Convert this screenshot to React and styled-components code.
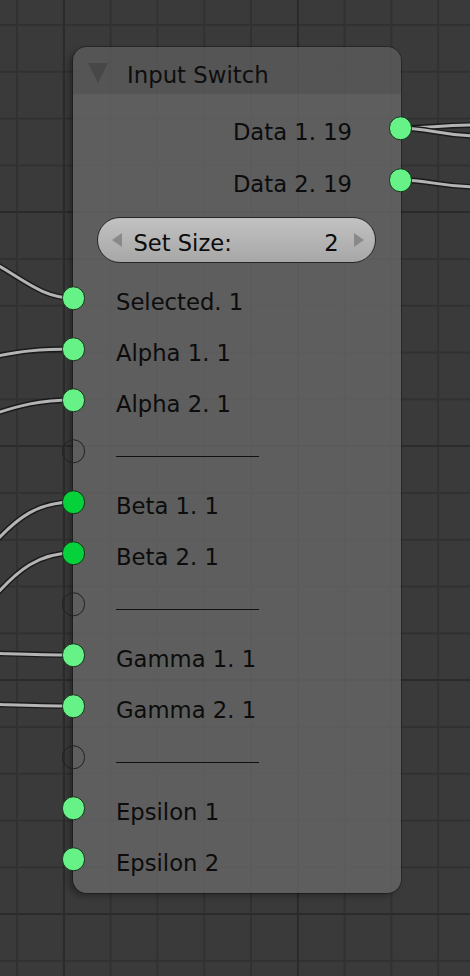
import React from 'react';
import styled, { createGlobalStyle } from 'styled-components';

const GlobalStyle = createGlobalStyle`
  html, body {
    margin: 0;
    padding: 0;
    background: #3a3a3a;
  }
  body {
    font-family: "DejaVu Sans", "Liberation Sans", sans-serif;
  }
`;

const outputs = ['Data 1. 19', 'Data 2. 19'];

const inputs = [
  { label: 'Selected. 1' },
  { label: 'Alpha 1. 1' },
  { label: 'Alpha 2. 1' },
  { empty: true },
  { label: 'Beta 1. 1', dark: true },
  { label: 'Beta 2. 1', dark: true },
  { empty: true },
  { label: 'Gamma 1. 1' },
  { label: 'Gamma 2. 1' },
  { empty: true },
  { label: 'Epsilon 1' },
  { label: 'Epsilon 2' },
];

// links drawn on the canvas (node editor noodles)
const links = [
  'M -12 260 C 20 276, 40 298, 73 298',
  'M -12 358 C 20 351, 40 349, 73 349',
  'M -12 416 C 20 405, 40 400, 73 400',
  'M -12 550 C 18 515, 40 502, 73 502',
  'M -12 604 C 18 568, 40 553, 73 553',
  'M -12 653 C 20 654, 40 655, 73 655',
  'M -12 704 C 20 705, 40 706, 73 706',
  'M 400 128 C 430 128, 440 125, 480 125',
  'M 400 128 C 430 128, 440 136, 480 136',
  'M 400 180 C 430 180, 440 187, 480 187',
];

const App = () => (
  <>
    <GlobalStyle />
    <Canvas>
      <Wires viewBox="0 0 470 976">
        {links.map((d, i) => (
          <g key={i}>
            <path d={d} stroke="#1a1a1a" strokeWidth="5.8" fill="none" />
            <path d={d} stroke="#b4b4b4" strokeWidth="3" fill="none" />
          </g>
        ))}
      </Wires>
      <Node>
        <Header>
          <Collapse />
          <Title>Input Switch</Title>
        </Header>
        <Body>
          {outputs.map((o) => (
            <OutRow key={o}>
              <Label>{o}</Label>
              <Socket $side="right" />
            </OutRow>
          ))}
          <Stepper>
            <Arrow $dir="left" />
            <StepLabel>Set Size:</StepLabel>
            <StepValue>2</StepValue>
            <Arrow $dir="right" />
          </Stepper>
          <Inputs>
            {inputs.map((item, i) => (
              <InRow key={i}>
                <Socket $side="left" $empty={item.empty} $dark={item.dark} />
                {item.empty ? <Divider /> : <Label>{item.label}</Label>}
              </InRow>
            ))}
          </Inputs>
        </Body>
      </Node>
    </Canvas>
  </>
);

const Canvas = styled.div`
  position: relative;
  width: 470px;
  height: 976px;
  overflow: hidden;
  box-sizing: border-box;
  padding: 47px 0 0 73px;
  background-color: #3a3a3a;
  background-image:
    linear-gradient(to right, #2b2b2b 2px, transparent 2px),
    linear-gradient(to bottom, #2b2b2b 2px, transparent 2px),
    linear-gradient(to right, #313131 2px, transparent 2px),
    linear-gradient(to bottom, #313131 2px, transparent 2px);
  background-size: 234px 100%, 100% 234px, 46.8px 100%, 100% 46.8px;
  background-position: 63px 0, 0 211px, 16px 0, 0 24px;
`;

const Wires = styled.svg`
  position: absolute;
  left: 0;
  top: 0;
  width: 470px;
  height: 976px;
  pointer-events: none;
`;

const Node = styled.div`
  position: relative;
  z-index: 1;
  width: 328px;
  border-radius: 14px;
  background: rgba(104, 104, 104, 0.8);
  box-shadow: -4px 3px 6px rgba(0, 0, 0, 0.3), 0 0 0 1px rgba(0, 0, 0, 0.28);
`;

const Header = styled.div`
  height: 47px;
  box-sizing: border-box;
  display: flex;
  align-items: center;
  padding: 8px 0 0 15px;
  border-radius: 14px 14px 0 0;
  background: rgba(0, 0, 0, 0.09);
`;

const Collapse = styled.div`
  width: 0;
  height: 0;
  margin-top: -3px;
  border-left: 10px solid transparent;
  border-right: 10px solid transparent;
  border-top: 20px solid #474747;
`;

const Title = styled.div`
  margin-left: 19px;
  font-size: 22.8px;
  color: #0e0e0e;
  white-space: nowrap;
`;

const Body = styled.div`
  padding: 8px 0 8.5px;
`;

const OutRow = styled.div`
  position: relative;
  height: 52px;
  display: flex;
  align-items: center;
  justify-content: flex-end;
  padding-right: 49px;
`;

const Inputs = styled.div`
  margin-top: 9.5px;
`;

const InRow = styled.div`
  position: relative;
  height: 51px;
  display: flex;
  align-items: center;
  padding-left: 43px;
`;

const Label = styled.span`
  padding-top: 8px;
  font-size: 22.7px;
  color: #0c0c0c;
  white-space: nowrap;
`;

const Divider = styled.div`
  width: 143px;
  margin-top: 10px;
  border-top: 1.8px solid #111;
`;

const Socket = styled.div`
  position: absolute;
  top: 50%;
  ${(p) => (p.$side === 'left' ? 'left: -11.5px;' : 'right: -11px;')}
  width: 23.5px;
  height: 23.5px;
  box-sizing: border-box;
  border-radius: 50%;
  transform: translateY(-50%);
  border: 1.6px solid ${(p) => (p.$empty ? '#202020' : '#15301a')};
  background: ${(p) => (p.$empty ? 'transparent' : p.$dark ? '#05d13a' : '#66f287')};
`;

const Stepper = styled.div`
  margin: 11px 25px 0 24px;
  height: 46px;
  box-sizing: border-box;
  display: flex;
  align-items: center;
  padding: 0 11.5px 0 13.5px;
  border: 1.6px solid #272727;
  border-radius: 23px;
  background: linear-gradient(to bottom, #c2c2c2, #a7a7a7);
`;

const Arrow = styled.div`
  width: 0;
  height: 0;
  border-top: 7px solid transparent;
  border-bottom: 7px solid transparent;
  ${(p) =>
    p.$dir === 'left'
      ? 'border-right: 10px solid #898989;'
      : 'border-left: 10px solid #898989;'}
`;

const StepLabel = styled.span`
  flex: 1;
  margin-left: 12px;
  padding-top: 5px;
  font-size: 22.6px;
  color: #0c0c0c;
  white-space: nowrap;
`;

const StepValue = styled.span`
  margin-right: 15px;
  padding-top: 5px;
  font-size: 22.6px;
  color: #0c0c0c;
`;

export default App;
